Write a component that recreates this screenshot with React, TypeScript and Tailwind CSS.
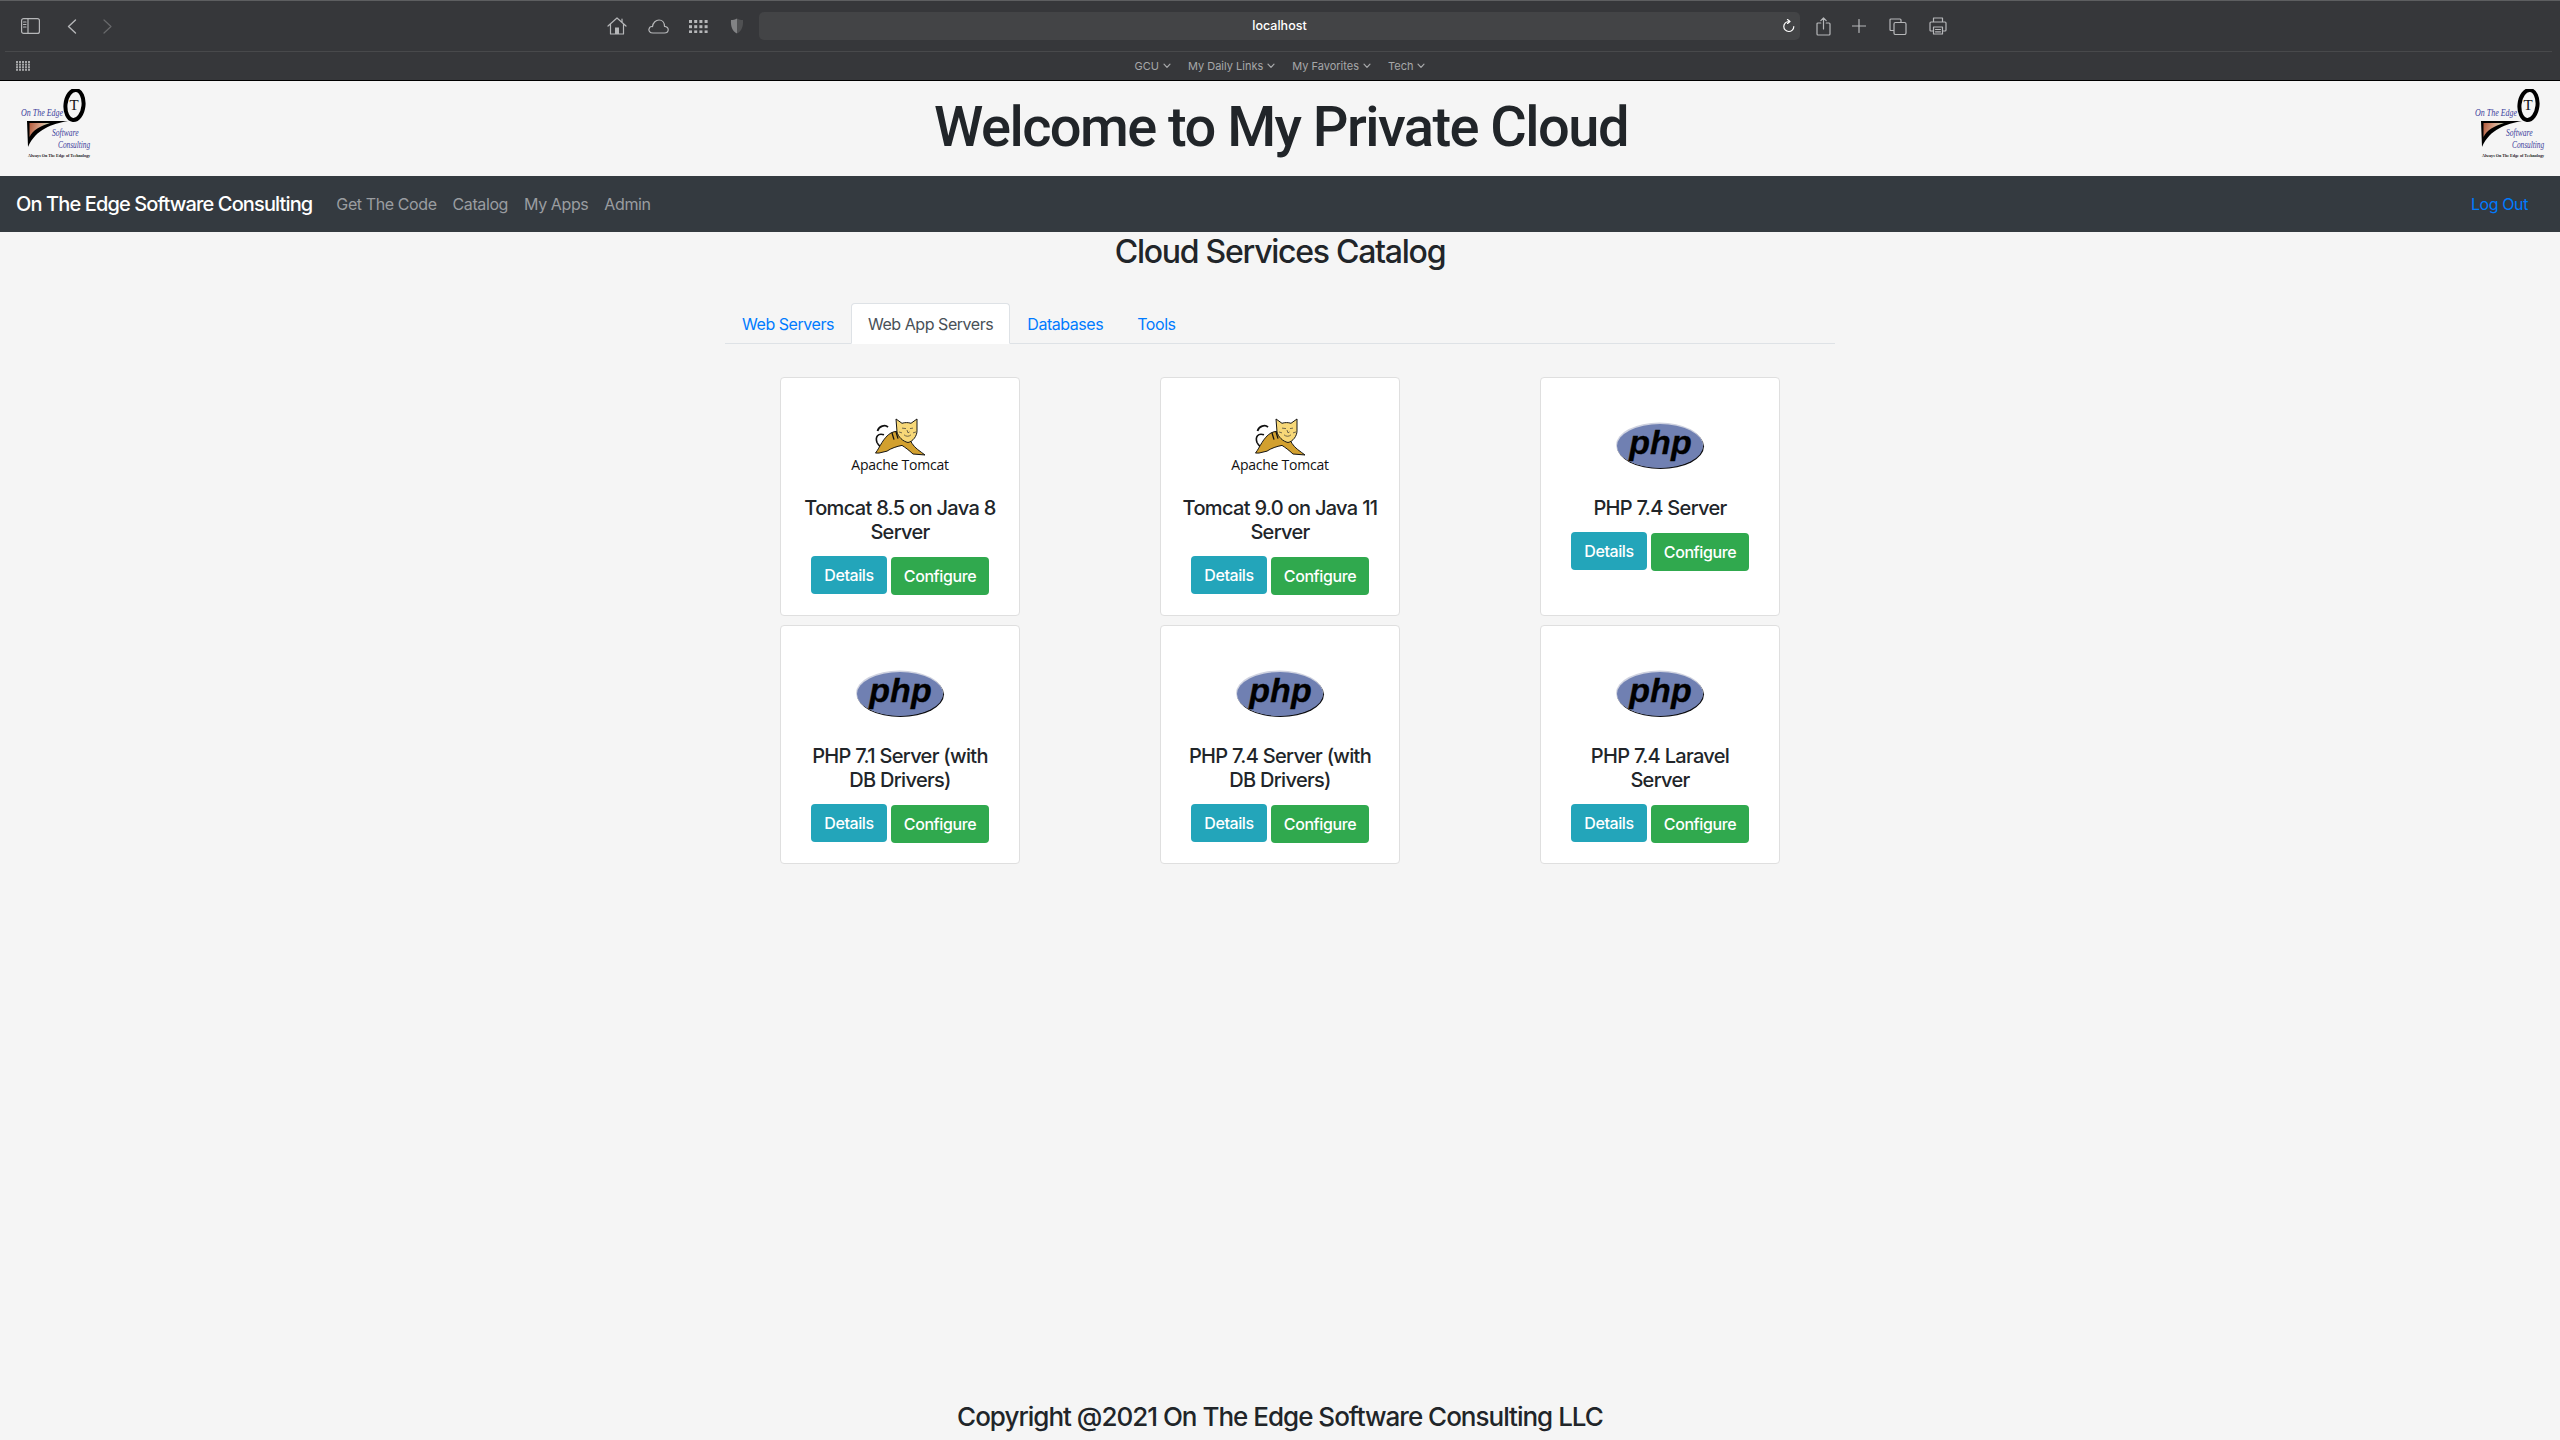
import React from "react";

const Stroke = { fill: "none", stroke: "currentColor", strokeWidth: 1.2, strokeLinecap: "round" as const, strokeLinejoin: "round" as const };

function Dots({ cols, rows, size, step, stepY }: { cols: number; rows: number; size: number; step: number; stepY?: number }) {
  const items = [];
  for (let r = 0; r < rows; r++) for (let c = 0; c < cols; c++) items.push(<rect key={`${r}-${c}`} x={c * step} y={r * (stepY ?? step)} width={size} height={size} fill="currentColor" />);
  return <>{items}</>;
}

function Chev() {
  return (
    <svg width="8" height="6" viewBox="0 0 8 6" className="text-[#a8a9ab]">
      <path d="M1 1.2 L4 4.4 L7 1.2" {...Stroke} />
    </svg>
  );
}

function Bookmark({ label }: { label: string }) {
  return (
    <div className="flex items-center gap-[4px] text-[11px] text-[#a6a7a9]">
      <span>{label}</span>
      <Chev />
    </div>
  );
}

function BrowserChrome() {
  return (
    <div className="bg-[#36373a] h-[81px] border-t border-t-[#5d5e60] border-b border-b-black flex flex-col text-[#b6b7b9]">
      <div className="h-[50px] flex items-center">
        <svg className="ml-[21px]" width="19" height="16" viewBox="0 0 19 16">
          <rect x="0.6" y="0.6" width="17.8" height="14.8" rx="2" {...Stroke} />
          <path d="M7 1 V15" {...Stroke} />
          <path d="M2.5 4 H5 M2.5 6.5 H5 M2.5 9 H5" {...Stroke} />
        </svg>
        <svg className="ml-[27px]" width="10" height="15" viewBox="0 0 10 15">
          <path d="M8.5 1 L1.5 7.5 L8.5 14" {...Stroke} strokeWidth={1.4} />
        </svg>
        <svg className="ml-[26px] text-[#68696b]" width="9" height="15" viewBox="0 0 9 15">
          <path d="M1 1 L8 7.5 L1 14" {...Stroke} />
        </svg>
        <svg className="ml-[495px]" width="20" height="18" viewBox="0 0 20 18">
          <path d="M1 9 L10 1 L19 9 M3.5 7 V17 H16.5 V7 M15 2 V5" {...Stroke} />
          <rect x="8" y="10.5" width="4" height="6.5" fill="currentColor" />
        </svg>
        <svg className="ml-[21px]" width="21" height="15" viewBox="0 0 21 15">
          <path d="M5 14 C1.5 14 0.6 11.5 1 10 C1.4 8.3 3 7.3 4.5 7.6 C5 3.5 8 1 11 1 C14.5 1 16.5 4 16.5 7.3 C18.8 7.5 20.4 9 20.2 11 C20 13 18.5 14 16.5 14 Z" {...Stroke} />
        </svg>
        <svg className="ml-[20px]" width="19" height="13" viewBox="0 0 19 13">
          <Dots cols={4} rows={3} size={3} step={5.2} />
        </svg>
        <svg className="ml-[22px]" width="14" height="16" viewBox="0 0 14 16">
          <path d="M7 0.5 C5 1.6 3 2 1 2 C0.6 8 2 13 7 15.5 Z" fill="#828385" />
          <path d="M7 0.5 C9 1.6 11 2 13 2 C13.4 8 12 13 7 15.5 Z" fill="#505153" />
        </svg>
        <div className="relative ml-[15px] w-[1041px] h-[28px] rounded-[5px] bg-[#434446] flex items-center justify-center text-[12.5px] font-medium text-white">
          localhost
          <svg className="absolute right-[5px] top-[7px]" width="12" height="14" viewBox="0 0 12 14">
            <path d="M6 2.5 A5 5 0 1 0 10.8 7.5 M4.5 0.6 L7 2.5 L4.5 4.4" {...Stroke} />
          </svg>
        </div>
        <svg className="ml-[16px]" width="15" height="19" viewBox="0 0 15 19">
          <path d="M4.8 6 H2 Q1 6 1 7 V17 Q1 18 2 18 H13 Q14 18 14 17 V7 Q14 6 13 6 H10.2 M7.5 12 V1 M4.8 3.6 L7.5 1 L10.2 3.6" {...Stroke} />
        </svg>
        <svg className="ml-[21px]" width="14" height="14" viewBox="0 0 14 14">
          <path d="M7 0.5 V13.5 M0.5 7 H13.5" {...Stroke} />
        </svg>
        <svg className="ml-[23px]" width="18" height="17" viewBox="0 0 18 17">
          <path d="M4.5 12.5 H2 Q1 12.5 1 11.5 V2 Q1 1 2 1 H11 Q12 1 12 2 V4.5" {...Stroke} />
          <rect x="5" y="4.5" width="12" height="12" rx="1.5" {...Stroke} />
        </svg>
        <svg className="ml-[22px]" width="18" height="18" viewBox="0 0 18 18">
          <path d="M4.5 5 V1 H13.5 V5 M4.5 14 H2 Q1 14 1 13 V6 Q1 5 2 5 H16 Q17 5 17 6 V13 Q17 14 16 14 H13.5" {...Stroke} />
          <path d="M4.5 10 H13.5 V17 H4.5 Z M6.5 12.5 H11.5 M6.5 14.8 H11.5" {...Stroke} />
        </svg>
      </div>
      <div className="h-px ml-[5px] mr-[8px] bg-[#48494b]" />
      <div className="flex-1 grid grid-cols-[1fr_auto_1fr] items-center">
        <svg className="ml-[16px] text-[#a6a7a9]" width="14" height="10" viewBox="0 0 14 10">
          <Dots cols={5} rows={4} size={2} step={3} stepY={2.6} />
        </svg>
        <div className="flex items-center gap-[17px]">
          <Bookmark label="GCU" />
          <Bookmark label="My Daily Links" />
          <Bookmark label="My Favorites" />
          <Bookmark label="Tech" />
        </div>
        <div />
      </div>
    </div>
  );
}

function CompanyLogo({ id }: { id: string }) {
  const serif = "'Liberation Serif', serif";
  return (
    <svg width="84" height="80" viewBox="12 88 84 80">
      <defs>
        <linearGradient id={id} x1="0" y1="0" x2="1" y2="0.2">
          <stop offset="0" stopColor="#b0583a" />
          <stop offset="0.55" stopColor="#d8a58b" />
          <stop offset="1" stopColor="#b9d7b4" />
        </linearGradient>
      </defs>
      <g transform="translate(21 115) scale(0.76 1)">
        <text fontFamily={serif} fontStyle="italic" fontSize="10.5" fill="#3d3f9c">On The Edge</text>
      </g>
      <path d="M27 120 L68 120 C52 123 36 128 28 146 Z" fill="#000" />
      <path d="M29.5 122 L50 122 C40 125 33 129 29.5 136 Z" fill={`url(#${id})`} />
      <ellipse cx="74.5" cy="104" rx="9" ry="15" fill="#f5f5f5" stroke="#000" strokeWidth="4" transform="rotate(6 74.5 104)" />
      <text x="69.5" y="109" fontFamily={serif} fontSize="15" fill="#111">T</text>
      <g transform="translate(52 135) scale(0.72 1)">
        <text fontFamily={serif} fontStyle="italic" fontSize="10.5" fill="#3d3f9c">Software</text>
      </g>
      <g transform="translate(58 147) scale(0.7 1)">
        <text fontFamily={serif} fontStyle="italic" fontSize="10.5" fill="#3d3f9c">Consulting</text>
      </g>
      <text x="28" y="155.5" fontFamily={serif} fontSize="4.1" fontWeight="700" fill="#222">Always On The Edge of Technology</text>
    </svg>
  );
}

function TomcatLogo() {
  return (
    <svg width="100" height="98" viewBox="0 0 100 98">
      <g transform="translate(25 20.5) scale(1 0.96)">
        <path d="M9 17 C3 15 0 19 2 25 C3 27 4 28 5 29" fill="none" stroke="#111" strokeWidth="1.6" />
        <path d="M2.5 13 C4 8 10 6 13 9" fill="none" stroke="#111" strokeWidth="1.8" />
        <path d="M0.5 36 C5 30 8 20 16 15 C20 13 24 13 27 14 L35 22 L37 26 C40 31 45 34 50 38 L38 37 C34 33 30 30 27 28 C22 29 16 31 12 34 L4 36 Z" fill="#d2a02f" stroke="#111" strokeWidth="1" strokeLinejoin="round" />
        <path d="M17 15 L19 22 M21 14 L23 21 M25 14 L26 20" stroke="#111" strokeWidth="1.3" />
        <path d="M21 0.5 L27 5 C30 4 33 4 36 5 L42 0.5 L42 13 C42 18 38 24 33 25 C28 24 23 19 22 14 Z" fill="#f7d878" stroke="#111" strokeWidth="1" strokeLinejoin="round" />
        <path d="M27 10 L31 10.5 M35 10.5 L38 10 M32 12 L33 15 L34.5 14 M29 17 C31 19 34 19 36 17 M27 15 L24 14 M38 15 L41 14" stroke="#333" strokeWidth="0.7" fill="none" />
      </g>
      <text x="50" y="72" textAnchor="middle" fontFamily="'Open Sans', sans-serif" fontSize="14" letterSpacing="-0.25" fill="#111">Apache Tomcat</text>
    </svg>
  );
}

function PhpLogo() {
  return (
    <svg width="100" height="98" viewBox="0 0 100 98">
      <ellipse cx="50.5" cy="48.5" rx="43.5" ry="22.5" fill="#0c0c10" />
      <ellipse cx="49.5" cy="47" rx="43.5" ry="22.5" fill="#cfd2e0" />
      <ellipse cx="50" cy="48" rx="43" ry="22" fill="#7080b2" />
      <text x="50.5" y="56" textAnchor="middle" fontFamily="'Liberation Sans', sans-serif" fontWeight="700" fontStyle="italic" fontSize="34" fill="#000" stroke="#000" strokeWidth="0.3">php</text>
    </svg>
  );
}

type Service = { title: string; logo: "tomcat" | "php" };

const services: Service[] = [
  { title: "Tomcat 8.5 on Java 8 Server", logo: "tomcat" },
  { title: "Tomcat 9.0 on Java 11 Server", logo: "tomcat" },
  { title: "PHP 7.4 Server", logo: "php" },
  { title: "PHP 7.1 Server (with DB Drivers)", logo: "php" },
  { title: "PHP 7.4 Server (with DB Drivers)", logo: "php" },
  { title: "PHP 7.4 Laravel Server", logo: "php" },
];

function Card({ service }: { service: Service }) {
  return (
    <div className="justify-self-center w-[240px] h-[239px] bg-white border border-[#dfdfdf] rounded-[4px] pt-[19px] px-[20px] flex flex-col items-center text-center">
      <div className="h-[99px] flex items-center justify-center">{service.logo === "tomcat" ? <TomcatLogo /> : <PhpLogo />}</div>
      <div className="text-[20px] leading-[24px] font-medium tracking-[-0.68px] text-[#212529] w-[198px]">{service.title}</div>
      <div className="mt-[12px] flex items-start gap-[4px] text-white text-[16px] tracking-[-0.4px]">
        <div className="w-[76px] h-[38px] rounded-[4px] bg-[#23a5ba] flex items-center justify-center font-medium">Details</div>
        <div className="mt-px w-[98px] h-[38px] rounded-[4px] bg-[#30a94e] flex items-center justify-center font-medium">Configure</div>
      </div>
    </div>
  );
}

export default function App() {
  return (
    <div className="min-h-screen h-[1440px] flex flex-col bg-[#f5f5f5] overflow-hidden font-[Inter,sans-serif] text-[#212529]">
      <BrowserChrome />
      <header className="h-[95px] flex items-center justify-between pl-[12px] pr-[10px]">
        <CompanyLogo id="swoosh-left" />
        <h1 className="mb-[4px] font-[Roboto,sans-serif] text-[56px] leading-[64px] font-medium tracking-[-1.55px]">Welcome to My Private Cloud</h1>
        <CompanyLogo id="swoosh-right" />
      </header>
      <nav className="h-[56px] bg-[#343a40] flex items-center px-[16px] text-[16px] tracking-[-0.4px]">
        <span className="text-[20px] font-medium text-white mr-[24px] tracking-[-0.87px]">On The Edge Software Consulting</span>
        <div className="flex gap-[16px] text-[#9a9da0]">
          <span>Get The Code</span>
          <span>Catalog</span>
          <span>My Apps</span>
          <span>Admin</span>
        </div>
        <span className="ml-auto mr-[16px] text-[#007bff]">Log Out</span>
      </nav>
      <main className="w-[1140px] mx-auto flex-1 flex flex-col">
        <h2 className="text-[32px] leading-[38px] font-medium text-center mt-px tracking-[-1.27px]">Cloud Services Catalog</h2>
        <div className="mx-[15px] mt-[32px] h-[41px] border-b border-[#dee2e6] flex text-[16px] text-[#007bff] tracking-[-0.45px]">
          <div className="px-[17px] h-[41px] flex items-center">Web Servers</div>
          <div className="px-[16px] h-[41px] flex items-center bg-white border border-[#dee2e6] border-b-white rounded-t-[4px] text-[#495057]">Web App Servers</div>
          <div className="px-[17px] h-[41px] flex items-center">Databases</div>
          <div className="px-[17px] h-[41px] flex items-center">Tools</div>
        </div>
        <div className="mt-[33px] grid grid-cols-3 gap-y-[9px]">
          {services.map((s, i) => (
            <Card key={i} service={s} />
          ))}
        </div>
      </main>
      <footer className="h-[40px] text-center text-[26px] leading-[34px] font-medium tracking-[-1px]">Copyright @2021 On The Edge Software Consulting LLC</footer>
    </div>
  );
}
